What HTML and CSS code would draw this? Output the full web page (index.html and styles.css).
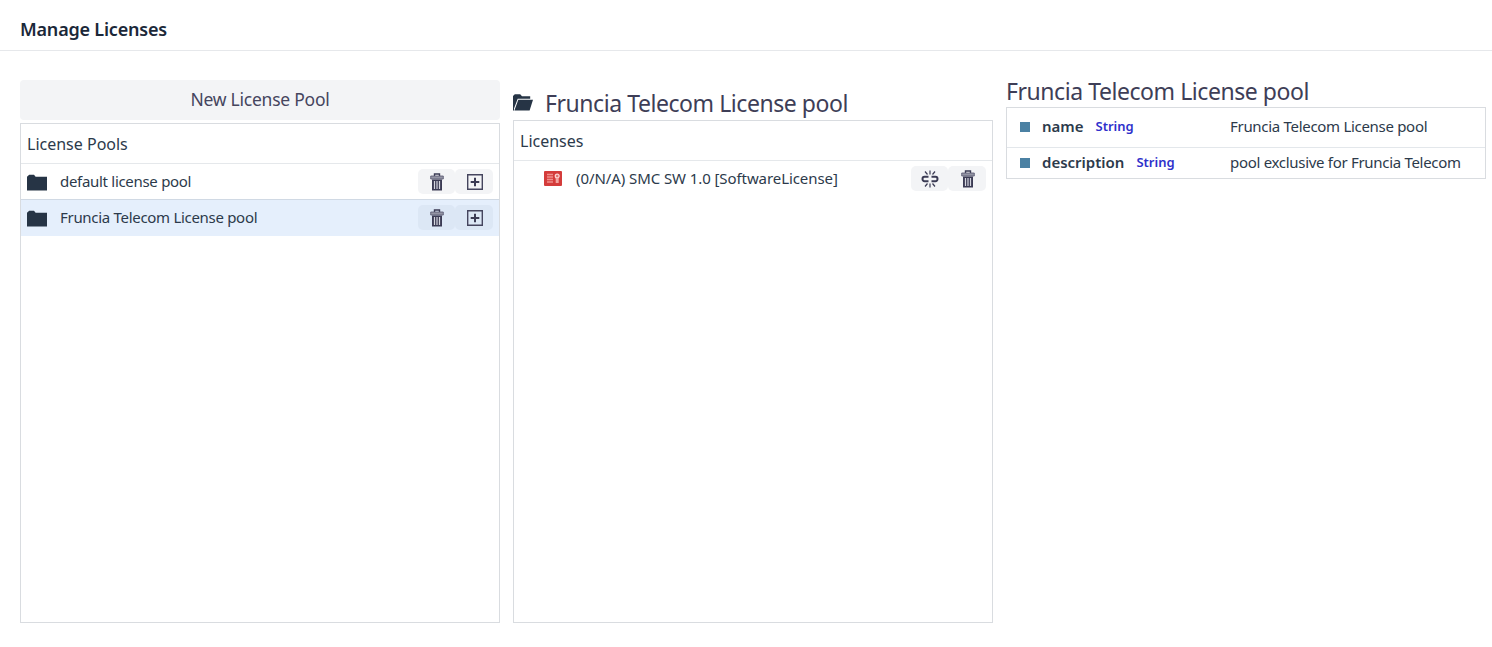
FILE: index.html
```html
<!DOCTYPE html>
<html lang="en">
<head>
<meta charset="utf-8">
<title>Manage Licenses</title>
<link rel="stylesheet" href="styles.css">
</head>
<body>
<svg class="defs" width="0" height="0" aria-hidden="true">
  <symbol id="folder" viewBox="0 0 20 17"><path d="M0 16.500V2.700L2.200.7h4.800l1.600 2H20V16.500z"/></symbol>
  <symbol id="folder-open" viewBox="0 0 20 17"><path d="M0 16.500V2L1.800.3h5.400L9 2.200h8.200v2.500H4.700L1 14.500V16.500zM5.300 5.800H20L16.600 16.600H1.400z"/></symbol>
  <symbol id="trash" viewBox="0 0 14 18"><path d="M4.500 3V1h5v2" fill="none" stroke="#3b3b54" stroke-width="1.400"/><path class="lid" d="M.7 3h12.600v3H.7z"/><path d="M.7 3h12.600v3H.7z" fill="none" stroke="#55556e" stroke-width=".8"/><path d="M2 6.500h10V17.500H2z"/><path d="M4.500 8v8M7 8v8M9.500 8v8" stroke="#d5d6df" stroke-width="1.200"/></symbol>
  <symbol id="plus" viewBox="0 0 16 16"><path d="M.7.7h14.600v14.600H.7z" fill="none" stroke="#45455e" stroke-width="1.400"/><path d="M8 3.700v8.600M3.700 8h8.600" stroke="#3b3b54" stroke-width="2"/></symbol>
  <symbol id="unlink" viewBox="0 0 18 18"><g fill="none" stroke="#3b3b54"><path stroke-width="2" d="M7.500 6.800H3.500a2 2.200 0 0 0 0 4.400H7.500M10.500 6.800H14.500a2 2.200 0 0 1 0 4.400H10.500"/><path stroke-width="1.200" d="M9 .5v4M4 1.500l2.500 3M14 1.500l-2.500 3M9 13.500v4M4 16.500l2.500-3M14 16.500l-2.500-3"/></g></symbol>
</svg>
<header class="top"><h1>Manage Licenses</h1></header>
<main class="columns">
  <section class="pools">
    <button class="new-pool">New License Pool</button>
    <div class="grid pool-grid">
      <div class="grid-head">License Pools</div>
      <div class="row">
        <svg class="folder"><use href="#folder"/></svg><span class="label">default license pool</span>
        <div class="actions"><button><svg class="trash"><use href="#trash"/></svg></button><button><svg class="plus"><use href="#plus"/></svg></button></div>
      </div>
      <div class="row selected">
        <svg class="folder"><use href="#folder"/></svg><span class="label">Fruncia Telecom License pool</span>
        <div class="actions"><button><svg class="trash"><use href="#trash"/></svg></button><button><svg class="plus"><use href="#plus"/></svg></button></div>
      </div>
    </div>
  </section>
  <section class="licenses">
    <h2 class="pool-title"><svg class="folder"><use href="#folder-open"/></svg><span>Fruncia Telecom License pool</span></h2>
    <div class="grid license-grid">
      <div class="grid-head">Licenses</div>
      <div class="row license">
        <svg class="card" viewBox="0 0 18 15"><rect width="18" height="15" rx="1" fill="#d43c3b"/><path d="M3 3.500h6M3 6h6M3 8.500h6M3 11h6" stroke="#f08f8c" stroke-width="1.400"/><circle cx="13.200" cy="5" r="1.900" fill="#e2706d" stroke="#fbd5d3" stroke-width="1.300"/><path d="M11.700 7h3v5h-3z" fill="#f3a5a2"/></svg>
        <span class="label">(0/N/A) SMC SW 1.0 [SoftwareLicense]</span>
        <div class="actions"><button><svg class="unlink"><use href="#unlink"/></svg></button><button><svg class="trash"><use href="#trash"/></svg></button></div>
      </div>
    </div>
  </section>
  <section class="details">
    <h2>Fruncia Telecom License pool</h2>
    <dl class="props">
      <div class="prop"><dt><i class="square"></i><b>name</b><em>String</em></dt><dd>Fruncia Telecom License pool</dd></div>
      <div class="prop"><dt><i class="square"></i><b>description</b><em>String</em></dt><dd>pool exclusive for Fruncia Telecom</dd></div>
    </dl>
  </section>
</main>
</body>
</html>
```
FILE: styles.css
```css
* { box-sizing: border-box; }
body { margin: 0; background: #fff; color: #2c3a4b; font: 15px/20px "Noto Sans", sans-serif; white-space: nowrap; }
h1, h2, dl, dd { margin: 0; font-weight: 400; }
svg { display: block; flex: none; fill: #263445; }
.defs { position: absolute; }
button { border: 0; padding: 0; font: inherit; color: #45455e; background: #f3f4f6; }
.top { height: 51px; padding: 16px 20px 0; border-bottom: 1px solid #e6e8eb; }
h1 { font-size: 18px; line-height: 26px; font-weight: 600; letter-spacing: -.2px; color: #1b2839; }
.columns { display: grid; grid-template-columns: 480px 480px 480px; gap: 13px; padding: 29px 6px 0 20px; }
.new-pool { display: block; width: 100%; height: 40px; padding-bottom: 2px; border-radius: 4px; font-size: 17.5px; letter-spacing: -.24px; margin-bottom: 3px; }
.grid { border: 1px solid #d9dce0; }
.pool-grid { height: 500px; }
.license-grid { height: 503px; }
.grid-head { height: 40px; padding: 0 6px; line-height: 40px; font-size: 16px; border-bottom: 1px solid #e5e8eb; }
.row { height: 35px; padding: 0 6px; display: flex; align-items: center; }
.row.selected { height: 37px; padding-bottom: 1px; background: #e5effc; border-top: 1px solid #d0d9e4; }
.label { letter-spacing: -.3px; padding-bottom: 1px; }
.folder { width: 20px; height: 17px; margin-right: 13px; }
.row .folder { margin-top: 2px; }
.actions { display: flex; margin-left: auto; }
.actions button { width: 37px; height: 25px; border-radius: 5px; display: grid; place-items: center; }
.actions button + button { width: 38px; padding-left: 1px; }
.selected button { background: #dce7f5; }
.trash { width: 14px; height: 18px; fill: #3b3b54; }
.lid { fill: #9495a5; }
.plus { width: 16px; height: 16px; }
.unlink { width: 18px; height: 18px; }
.license { padding-left: 30px; }
.license .label { letter-spacing: -.08px; }
.card { width: 18px; height: 15px; margin-right: 14px; }
h2 { font-size: 23px; line-height: 30px; letter-spacing: -.44px; color: #3e3e57; }
.pool-title { display: flex; align-items: center; height: 40px; padding-top: 6px; }
.pool-title .folder { margin-top: -1px; margin-right: 12px; }
.details h2 { height: 27px; line-height: 23px; }
.props { height: 72px; border: 1px solid #d9dce0; }
.prop { height: 39px; padding: 0 0 2px 13px; display: grid; grid-template-columns: 210px 1fr; align-items: center; }
.prop + .prop { height: 32px; border-top: 1px solid #e3e7eb; padding-bottom: 1px; }
dt { display: flex; align-items: center; }
dd { letter-spacing: -.3px; }
dt b, dt em, dd { padding-bottom: 2px; }
.square { width: 10px; height: 10px; margin-right: 12px; background: #4b81a3; }
dt b { font-weight: 600; margin-right: 12px; }
dt em { font-style: normal; font-weight: 600; font-size: 13px; color: #2e30cb; }
```
